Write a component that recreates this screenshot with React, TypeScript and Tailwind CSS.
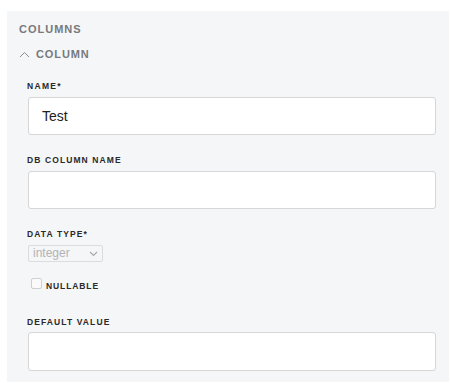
import React from "react";

const label =
  "block text-[8.5px] leading-[10px] font-bold uppercase tracking-[1.1px] text-[#2a2a2a]";

export default function App() {
  return (
    <div
      className="w-[451px] h-[383px] bg-white overflow-hidden"
      style={{ fontFamily: '"Liberation Sans", Arial, sans-serif' }}
    >
      <div className="ml-[7px] mt-[11px] w-[442px] h-[371px] bg-[#f5f6f8] pt-[11px] pl-[12px] pr-[13px]">
        <div className="text-[11px] leading-[14px] font-bold tracking-[1px] text-[#777a7e]">
          COLUMNS
        </div>
        <div className="mt-[11px] flex items-center h-[14px]">
          <svg width="11" height="7" viewBox="0 0 11 7" className="mr-[6px] mt-[1px]">
            <polyline
              points="1,6 5.5,1.5 10,6"
              fill="none"
              stroke="#8a8c90"
              strokeWidth="1"
            />
          </svg>
          <span className="text-[11px] leading-[14px] font-bold tracking-[0.9px] text-[#777a7e]">
            COLUMN
          </span>
        </div>
        <div className="pl-[8px]">
          <span className={label + " mt-[20px] tracking-[1.3px]"}>NAME*</span>
          <div className="mt-[6px] ml-[1px] h-[38px] bg-white border border-[#d6d6d6] rounded-[3px] flex items-center pl-[13px] text-[14px] text-[#222]">
            Test
          </div>

          <span className={label + " mt-[20px]"}>DB COLUMN NAME</span>
          <div className="mt-[6px] ml-[1px] h-[38px] bg-white border border-[#d6d6d6] rounded-[3px]" />

          <span className={label + " mt-[20px]"}>DATA TYPE*</span>
          <div className="mt-[6px] ml-[1px] w-[75px] h-[17px] border border-[#dcdcdc] rounded-[2px] flex items-center justify-between pl-[4px] pr-[4px] text-[12px] text-[#b3b3b3]">
            <span className="leading-[15px]">integer</span>
            <svg width="9" height="6" viewBox="0 0 9 6">
              <polyline points="1,1 4.5,4.5 8,1" fill="none" stroke="#a8a8a8" strokeWidth="1.2" />
            </svg>
          </div>

          <div className="mt-[16px] ml-[4px] flex items-end h-[11px]">
            <div className="w-[11px] h-[11px] border border-[#cfcfcf] rounded-[2px] bg-[#fafafa]" />
            <span className="ml-[4px] text-[8.5px] leading-[8px] font-bold tracking-[0.9px] text-[#2a2a2a] mb-[-1px]">
              NULLABLE
            </span>
          </div>

          <span className={label + " mt-[28px]"}>DEFAULT VALUE</span>
          <div className="mt-[5px] ml-[1px] h-[39px] bg-white border border-[#d6d6d6] rounded-[3px]" />
        </div>
      </div>
    </div>
  );
}
